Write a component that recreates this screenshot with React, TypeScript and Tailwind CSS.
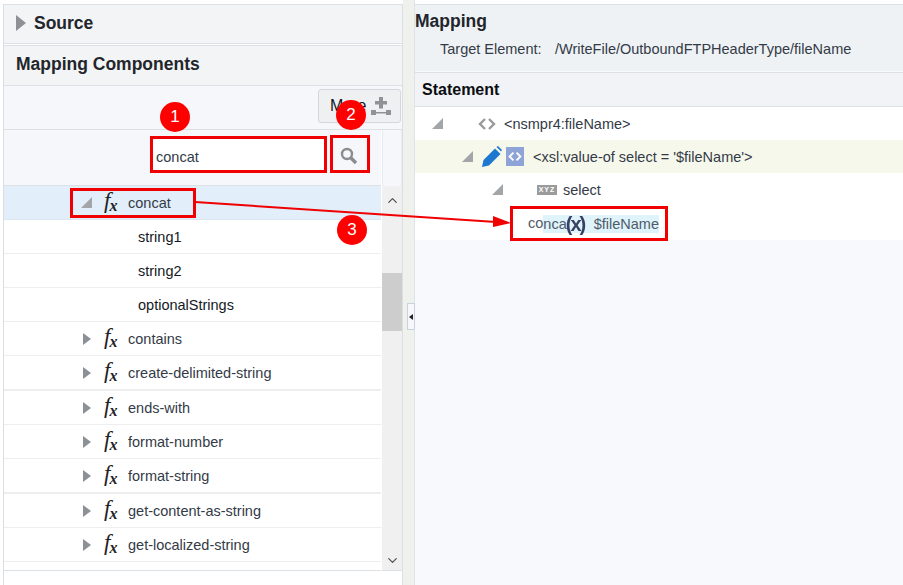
import React from 'react';
import { ChevronDown, ChevronUp } from 'lucide-react';

const functions = [
  { name: 'contains', rowClass: 'h-[34px] border-b border-[#eeeeee]' },
  { name: 'create-delimited-string', rowClass: 'h-[35px] border-b-2 border-[#eeeeee]' },
  { name: 'ends-with', rowClass: 'h-[34px] border-b border-[#eeeeee]' },
  { name: 'format-number', rowClass: 'h-[34px] border-b border-[#eeeeee]' },
  { name: 'format-string', rowClass: 'h-[35px] border-b-2 border-[#eeeeee]' },
  { name: 'get-content-as-string', rowClass: 'h-[34px] border-b border-[#eeeeee]' },
  { name: 'get-localized-string', rowClass: 'h-[34px] border-b border-[#eeeeee]' },
];

const params = [
  { name: 'string1', rowClass: 'h-[34px]' },
  { name: 'string2', rowClass: 'h-[34px]' },
  { name: 'optionalStrings', rowClass: 'h-[34px]' },
];

function Collapsed() {
  return <span className="block w-0 h-0 border-y-[6px] border-y-transparent border-l-[8px] border-l-[#8b9196]" />;
}

function Expanded() {
  return (
    <svg width="11" height="11" viewBox="0 0 11 11" className="block">
      <path d="M11 0V11H0Z" fill="#a3a6a9" />
    </svg>
  );
}

function Fx() {
  return (
    <span className="w-[16px] h-[22px] flex items-center text-[#1f2226] font-['Liberation_Serif',serif] italic leading-none select-none">
      <span className="text-[23px] -mt-[4px]">f</span>
      <span className="text-[16px] font-bold mt-[7px] -ml-[1px]">x</span>
    </span>
  );
}

function Angle({ className }: { className: string }) {
  return (
    <svg width="18" height="14" viewBox="0 0 18 14" fill="none" className={className}>
      <path d="M7 2 2 7l5 5M11 2l5 5-5 5" stroke="currentColor" strokeWidth="2.4" />
    </svg>
  );
}

function Marker({ n, className }: { n: number; className: string }) {
  return (
    <span className={`absolute w-[30px] h-[30px] rounded-full bg-[#fe0000] text-white text-[17px] flex items-center justify-center ${className}`}>
      {n}
    </span>
  );
}

function RedBox({ className }: { className: string }) {
  return <span className={`absolute border-[3px] border-[#f00000] ${className}`} />;
}

export default function App() {
  return (
    <div className="relative w-[903px] h-[585px] overflow-hidden bg-white flex pt-[4px] pl-[3px] font-['Liberation_Sans',Arial,sans-serif] text-[14.5px] text-[#333b47]">
      {/* Left column */}
      <div className="w-[400px] flex flex-col border-x border-[#d9dfe4]">
        <div className="h-[40px] flex items-center gap-[8px] pl-[12px] pb-[2px] bg-[#f3f4f5] border-y border-[#dce1e5]">
          <span className="block w-0 h-0 border-y-[8px] border-y-transparent border-l-[10px] border-l-[#8d9195]" />
          <span className="text-[17.5px] font-bold text-[#22262b]">Source</span>
        </div>
        <div className="h-[41px] mt-[1px] flex items-center pl-[12px] pb-[2px] bg-[#f3f4f5] border-y border-[#dce1e5]">
          <span className="text-[17.5px] font-bold text-[#22262b]">Mapping Components</span>
        </div>
        <div className="h-[44px] flex justify-end items-start pt-[3px] pr-[1px] bg-[#f5f7fa] border-b border-[#dce1e5]">
          <button className="w-[83px] h-[34px] flex items-center justify-between pl-[11px] pr-[9px] rounded-[3px] bg-[#eef0f2] border border-[#d3d8dd] text-[16px] text-[#11161c]">
            More
            <svg width="20" height="19" viewBox="0 0 20 19" fill="#8f9396">
              <path d="M8 0h4v4h4v3.500h-4v4H8v-4H4V4h4Z" />
              <path d="M0 13h5v5H0ZM15 13h5v5h-5ZM5 15h10v1.500H5Z" />
            </svg>
          </button>
        </div>

        {/* Tree and scrollbar */}
        <div className="h-[441px] flex">
          <div className="w-[377px] flex flex-col">
            <div className="h-[56px] flex pl-[148px] pt-[8px] gap-[5px] bg-[#f5f7fa] border-b border-[#dce1e5]">
              <input
                readOnly
                value="concat"
                className="w-[175px] h-[34px] pl-[4px] pt-[3px] bg-white text-[14.5px] text-[#333b47] outline-none"
              />
              <span className="w-[34px] h-[34px] flex items-center justify-center pt-[2px]">
                <svg width="18" height="18" viewBox="0 0 18 18" fill="none" stroke="#8c8c8c">
                  <circle cx="7" cy="7" r="5" strokeWidth="2.4" />
                  <path d="M10.500 10.500 16 16" strokeWidth="3.4" />
                </svg>
              </span>
            </div>
            <div className="h-[34px] shrink-0 flex items-center pl-[77px] bg-[#e2eef9] border-b border-[#dce6ee]">
              <span className="w-[23px]"><Expanded /></span>
              <Fx />
              <span className="ml-[8px] mt-[2px]">concat</span>
            </div>
            {params.map((p) => (
              <div key={p.name} className={`${p.rowClass} shrink-0 flex items-center pl-[134px] pt-[2px] border-b border-[#eeeeee] text-[#15191e]`}>
                {p.name}
              </div>
            ))}
            {functions.map((f) => (
              <div key={f.name} className={`${f.rowClass} shrink-0 flex items-center pl-[79px]`}>
                <span className="w-[21px]"><Collapsed /></span>
                <Fx />
                <span className="ml-[8px] mt-[2px]">{f.name}</span>
              </div>
            ))}
            <div className="flex-1 border-b border-[#dce1e5]" />
          </div>
          <div className="w-[20px] flex flex-col bg-[#f0f0f0] ml-[1px] border-b border-[#dce1e5]">
            <div className="h-[56px] -mb-[1px] bg-[#f5f7fa] border-x border-[#e6ebf0]" />
            <span className="h-[20px] mt-[1px] flex items-center justify-center pt-[8px] text-[#505050]">
              <ChevronUp size={15} strokeWidth={2} />
            </span>
            <div className="h-[58px] mt-[67px] bg-[#cdcdcd]" />
            <span className="mt-auto mb-[2px] flex items-center justify-center text-[#505050]">
              <ChevronDown size={15} strokeWidth={2} />
            </span>
          </div>
        </div>
      </div>

      {/* Splitter */}
      <div className="w-[12px] -mt-[4px] bg-[#eef1ec] pl-[4px] pt-[303px] border-r border-[#dde3e7]">
        <div className="w-[8px] h-[27px] flex items-center justify-center bg-[#f5f7fa] border border-[#c9d3de]">
          <span className="block w-0 h-0 border-y-[3px] border-y-transparent border-r-[4px] border-r-[#222222]" />
        </div>
      </div>

      {/* Right column */}
      <div className="flex-1 flex flex-col bg-[#f7f9fd]">
        <div className="h-[67px] bg-[#eff2f5] border-t border-[#dce1e5] pt-[6px]">
          <div className="text-[17.5px] font-bold text-[#22262b] leading-[21px]">Mapping</div>
          <div className="flex mt-[8px] pl-[25px] leading-[18px] text-[#333b47]">
            <span className="w-[115px]">Target Element:</span>
            <span>/WriteFile/OutboundFTPHeaderType/fileName</span>
          </div>
        </div>
        <div className="h-[35px] mt-[1px] flex items-center pl-[7px] bg-[#f1f3f6] border-y border-[#dce1e5] text-[16px] font-bold text-[#0b0d10]">
          Statement
        </div>
        <div className="h-[33px] flex items-center bg-white pl-[17px]">
          <span className="w-[46px]"><Expanded /></span>
          <Angle className="text-[#9a9a9a]" />
          <span className="ml-[8px] mt-[2px]">&lt;nsmpr4:fileName&gt;</span>
        </div>
        <div className="h-[33px] flex items-center bg-[#f7f8ec] pl-[47px]">
          <span className="w-[20px]"><Expanded /></span>
          <svg width="20" height="21" viewBox="0 0 20 21" className="block">
            <path d="M0 21 1.500 14 13 2.500l5.500 5.500L7 19.500Z" fill="#1f78cf" />
            <path d="M14.500 1 16 0l4 4-1 1.500Z" fill="#1f78cf" />
          </svg>
          <span className="w-[18px] h-[19px] ml-[4px] flex items-center justify-center bg-[#8ea4d6] text-white">
            <Angle className="w-[14px] h-[11px]" />
          </span>
          <span className="ml-[9px] mt-[2px]">&lt;xsl:value-of select = '$fileName'&gt;</span>
        </div>
        <div className="h-[33px] flex items-center bg-white pl-[77px]">
          <span className="w-[45px]"><Expanded /></span>
          <span className="w-[20px] h-[10px] flex items-center justify-center bg-[#9b9b9b] text-white text-[7px] font-bold tracking-[1px] leading-none">XYZ</span>
          <span className="ml-[6px] mt-[2px]">select</span>
        </div>
        <div className="h-[34px] flex items-center bg-white pl-[113px] pt-[1px] text-[#4f5a6b]">
          <span className="mt-[1px]">co</span>
          <span className="h-[18px] flex items-center bg-[#dff3fa] leading-[18px]">
            nca
            <span className="-ml-[2px] w-[26px] pl-[1px] font-['Liberation_Sans',sans-serif] font-bold text-[20px] tracking-[-2px] leading-none text-[#3a4064] blur-[0.6px]">(x)</span>
            <span className="ml-[3px]">$fileName</span>
          </span>
        </div>
      </div>

      {/* Annotations */}
      <RedBox className="left-[150px] top-[136px] w-[177px] h-[37px]" />
      <RedBox className="left-[330px] top-[135px] w-[40px] h-[38px]" />
      <RedBox className="left-[70px] top-[188px] w-[126px] h-[30px]" />
      <RedBox className="left-[510px] top-[206px] w-[158px] h-[35px]" />
      <svg width="903" height="585" viewBox="0 0 903 585" className="absolute left-0 top-0 pointer-events-none">
        <path d="M195 202 496 222" stroke="#f00000" strokeWidth="2" />
        <path d="M493 216 511 223 493 227Z" fill="#f00000" />
      </svg>
      <Marker n={1} className="left-[160px] top-[102px]" />
      <Marker n={2} className="left-[336px] top-[100px]" />
      <Marker n={3} className="left-[337px] top-[215px]" />
    </div>
  );
}
